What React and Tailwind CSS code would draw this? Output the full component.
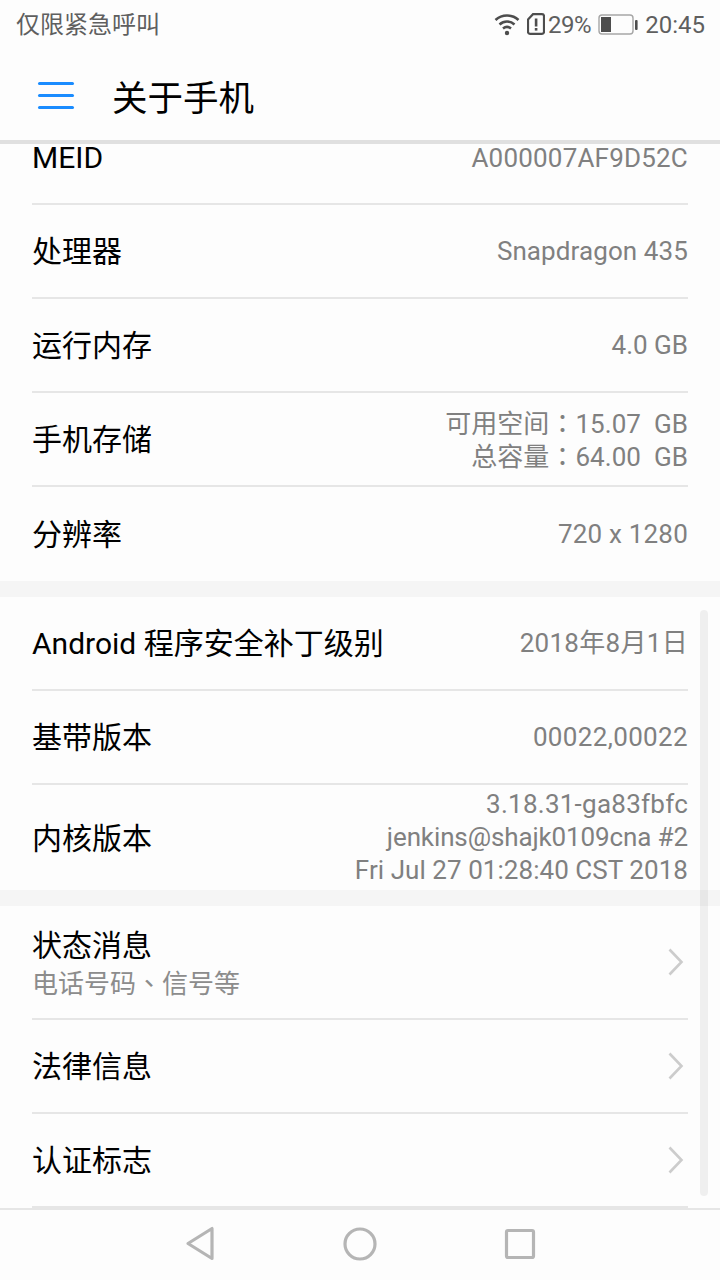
const font = { fontFamily: '"Roboto", "Noto Sans CJK SC", sans-serif' };
const tc = { fontFamily: '"Noto Sans CJK TC", sans-serif' };

function Chevron() {
  return (
    <svg width="18" height="30" viewBox="0 0 18 30" fill="none" className="mr-[3px] shrink-0">
      <path d="M2.5 2.5 L14.5 15 L2.5 27.5" stroke="#cccccc" strokeWidth="2.6" />
    </svg>
  );
}

function Row({ label, value, valueClass = "tracking-[0.2px]", h = "h-[94px]", border = true, lines, sub, chevron }) {
  return (
    <div className={`${h} mx-8 flex items-center justify-between ${border ? "border-b-2 border-[#e6e6e6]" : ""}`}>
      <div className="flex translate-y-px flex-col">
        <span className="text-[30px] leading-[36px] text-black">{label}</span>
        {sub && <span className="mt-[2px] translate-y-[2px] text-[26px] leading-[32px] text-[#8c8c8c]">{sub}</span>}
      </div>
      {value && <span className={`text-[26px] leading-[32px] text-[#808080] ${valueClass}`}>{value}</span>}
      {lines}
      {chevron && <Chevron />}
    </div>
  );
}

function Gap() {
  return <div className="h-4 bg-[#f5f5f5]" />;
}

export default function App() {
  return (
    <div style={font} className="relative flex h-[1280px] w-[720px] flex-col overflow-hidden bg-[#fdfdfd]">
      <div className="flex h-[50px] shrink-0 items-center justify-between pl-4 pr-[15px] text-[#5f5f5f]">
        <span className="text-[24px] leading-[30px]">仅限紧急呼叫</span>
        <div className="flex items-center">
          <svg width="26" height="24" viewBox="0 0 26 24" fill="none" stroke="#4d4d4d" strokeWidth="2.6" className="mr-[7px]">
            <path d="M1.5 7 C8 1 18 1 24.5 7" />
            <path d="M5.5 11.5 C10 7.5 16 7.5 20.5 11.5" />
            <path d="M9 15.5 C11.5 13.5 14.5 13.5 17 15.5" />
            <circle cx="13" cy="20" r="2.2" fill="#4d4d4d" stroke="none" />
          </svg>
          <svg width="18" height="22" viewBox="0 0 18 22" fill="none" className="mr-[3px] -translate-y-px">
            <path d="M6 1.2 H15 a2 2 0 0 1 2 2 V18.8 a2 2 0 0 1 -2 2 H3 a2 2 0 0 1 -2 -2 V6.5 Z" stroke="#4d4d4d" strokeWidth="2.2" />
            <rect x="7.8" y="5.5" width="2.6" height="8" fill="#4d4d4d" />
            <rect x="7.8" y="15" width="2.6" height="2.6" fill="#4d4d4d" />
          </svg>
          <span className="text-[24px] leading-[30px] tracking-[-0.4px]">29%</span>
          <svg width="40" height="22" viewBox="0 0 40 22" fill="none" className="ml-[7px] mr-[7px]">
            <rect x="1" y="1" width="34" height="19" rx="3" stroke="#a6a6a6" strokeWidth="1.4" />
            <rect x="3" y="3" width="10" height="15" fill="#4d4d4d" />
            <rect x="37" y="6" width="2.6" height="10" rx="1" fill="#4d4d4d" />
          </svg>
          <span className="text-[24px] leading-[30px]">20:45</span>
        </div>
      </div>

      <div className="flex h-[90px] shrink-0 items-center">
        <div className="ml-[38px] flex w-9 flex-col gap-[9px]">
          <div className="h-[3px] rounded-full bg-[#1a8cff]" />
          <div className="h-[3px] rounded-full bg-[#1a8cff]" />
          <div className="h-[3px] rounded-full bg-[#1a8cff]" />
        </div>
        <span className="ml-[38px] translate-y-[4px] text-[35.5px] leading-[44px] text-black">关于手机</span>
      </div>
      <div className="h-1 shrink-0 bg-[#e0e0e0]" />

      <main className="relative min-h-0 flex-1">
        <div className="mx-8 flex h-[61px] items-start justify-between border-b-2 border-[#e6e6e6]">
          <span className="text-[30px] leading-[28px] text-black">MEID</span>
          <span className="text-[26px] leading-[28px] tracking-[0.2px] text-[#808080]">A000007AF9D52C</span>
        </div>
        <Row label="处理器" value="Snapdragon 435" valueClass="tracking-[0.1px]" />
        <Row label="运行内存" value="4.0 GB" valueClass="tracking-[0px]" />
        <Row
          label="手机存储"
          lines={
            <div className="flex translate-y-[2px] flex-col items-end text-[26px] leading-[33px] tracking-[0.05px] text-[#808080]">
              <span className="h-[33px] whitespace-pre">可用空间<span style={tc} className="leading-none">：</span>15.07  GB</span>
              <span className="h-[33px] whitespace-pre">总容量<span style={tc} className="leading-none">：</span>64.00  GB</span>
            </div>
          }
        />
        <Row label="分辨率" value="720 x 1280" border={false} />
        <Gap />
        <Row label="Android 程序安全补丁级别" value="2018年8月1日" valueClass="tracking-[0.3px]" />
        <Row label="基带版本" value="00022,00022" valueClass="tracking-[0.35px]" />
        <Row
          label="内核版本"
          h="h-[105px]"
          border={false}
          lines={
            <div className="flex flex-col items-end text-[26px] leading-[33px] text-[#808080]">
              <span className="tracking-[0.25px]">3.18.31-ga83fbfc</span>
              <span className="tracking-[-0.12px]">jenkins@shajk0109cna #2</span>
              <span className="tracking-[0.05px]">Fri Jul 27 01:28:40 CST 2018</span>
            </div>
          }
        />
        <Gap />
        <Row label="状态消息" sub={<>电话号码<span style={tc} className="leading-none">、</span>信号等</>} chevron h="h-[114px]" />
        <Row label="法律信息" chevron />
        <Row label="认证标志" chevron />
        <div className="absolute right-3 top-[466px] h-[586px] w-2 rounded-full bg-black/[0.055]" />
      </main>

      <div className="flex h-[72px] shrink-0 items-center justify-center gap-[112px] border-t-2 border-[#e6e6e6] pb-[2px]">
        <svg width="48" height="48" viewBox="0 0 48 48" fill="none" stroke="#b5b5b5" strokeWidth="3.2" strokeLinejoin="round">
          <path d="M36 8.5 V38.5 L12 23.5 Z" />
        </svg>
        <svg width="48" height="48" viewBox="0 0 48 48" fill="none" stroke="#b5b5b5" strokeWidth="3.2">
          <circle cx="24" cy="24" r="15" />
        </svg>
        <svg width="48" height="48" viewBox="0 0 48 48" fill="none" stroke="#b5b5b5" strokeWidth="3.2">
          <rect x="10.5" y="10.5" width="27" height="27" rx="1.5" />
        </svg>
      </div>
    </div>
  );
}
